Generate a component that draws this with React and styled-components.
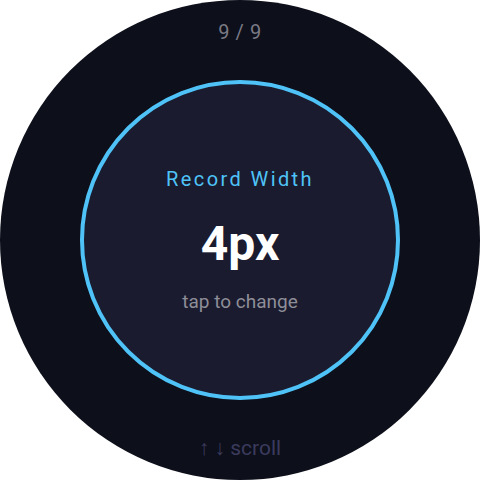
import React from "react";
import styled, { createGlobalStyle } from "styled-components";

const GlobalStyle = createGlobalStyle`
  html, body {
    margin: 0;
    padding: 0;
    background: #ffffff;
  }
  body {
    font-family: Roboto, "Noto Sans", sans-serif;
  }
`;

const Watch = styled.div`
  width: 480px;
  height: 480px;
  border-radius: 50%;
  background-color: #0d0f1a;
  display: flex;
  flex-direction: column;
  align-items: center;
  padding: 20px 0;
  box-sizing: border-box;
  gap: 38px;
`;

const Pager = styled.div`
  height: 24px;
  line-height: 24px;
  font-size: 20px;
  color: #7a7a85;
  letter-spacing: 0.6px;
`;

const Ring = styled.div`
  width: 320px;
  height: 320px;
  margin: -2px 0;
  border-radius: 50%;
  border: 4px solid #4fc3f7;
  background-color: #1a1b2e;
  box-sizing: border-box;
  display: flex;
  flex-direction: column;
  align-items: center;
  justify-content: center;
`;

const Title = styled.div`
  font-size: 20px;
  line-height: 24px;
  color: #4fc3f7;
  letter-spacing: 2.4px;
`;

const Value = styled.div`
  margin-top: 25px;
  font-size: 48px;
  line-height: 56px;
  font-weight: 700;
  color: #ffffff;
`;

const Hint = styled.div`
  margin-top: 19px;
  font-size: 19px;
  line-height: 22px;
  color: #8e8e98;
`;

const ScrollHint = styled.div`
  height: 24px;
  line-height: 24px;
  font-size: 21px;
  color: #3b3b5e;
`;

export default function App() {
  return (
    <>
      <GlobalStyle />
      <Watch>
        <Pager>9 / 9</Pager>
        <Ring>
          <Title>Record Width</Title>
          <Value>4px</Value>
          <Hint>tap to change</Hint>
        </Ring>
        <ScrollHint>↑ ↓ scroll</ScrollHint>
      </Watch>
    </>
  );
}
